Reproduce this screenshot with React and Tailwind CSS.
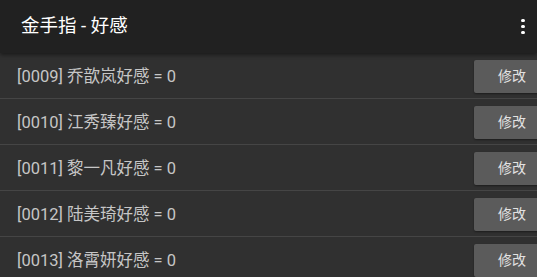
import React from 'react';

const FONT = { fontFamily: 'Roboto, "Noto Sans CJK SC", sans-serif' };

const items = [
  { id: '0009', name: '乔歆岚' },
  { id: '0010', name: '江秀臻' },
  { id: '0011', name: '黎一凡' },
  { id: '0012', name: '陆美琦' },
  { id: '0013', name: '洛霄妍' },
];

const App = () => {
  return (
    <div className="w-[537px] h-[277px] overflow-hidden bg-[#303030] flex flex-col" style={FONT}>
      {/* HEADER */}
      <header className="relative z-10 h-[53px] shrink-0 bg-[#212121] flex items-center justify-between pl-[21px] pr-[10px] shadow-[0_2px_4px_rgba(0,0,0,0.45)]">
        <h1 className="text-[18.5px] text-white leading-none">金手指 - 好感</h1>
        <div className="flex flex-col items-center gap-[2.5px] w-[6px] mr-[1px]">
          <span className="w-[3.5px] h-[3.5px] rounded-full bg-white" />
          <span className="w-[3.5px] h-[3.5px] rounded-full bg-white" />
          <span className="w-[3.5px] h-[3.5px] rounded-full bg-white" />
        </div>
      </header>

      {/* LIST */}
      <main className="flex-1 overflow-hidden">
        {items.map((it) => (
          <div
            key={it.id}
            className="h-[46px] border-b border-[#454545] flex items-center justify-between pl-[17px]"
          >
            <span className="text-[16.5px] text-[#c6c6c6] mt-[3px]">
              [{it.id}] {it.name}好感 = 0
            </span>
            <button className="h-[33px] w-[76px] mr-[-13px] mt-[2px] rounded-[2px] bg-[#5b5b5b] text-[14px] text-[#e2e2e2] shadow-[0_1px_2px_rgba(0,0,0,0.4)]">
              修改
            </button>
          </div>
        ))}
      </main>
    </div>
  );
};

export default App;
